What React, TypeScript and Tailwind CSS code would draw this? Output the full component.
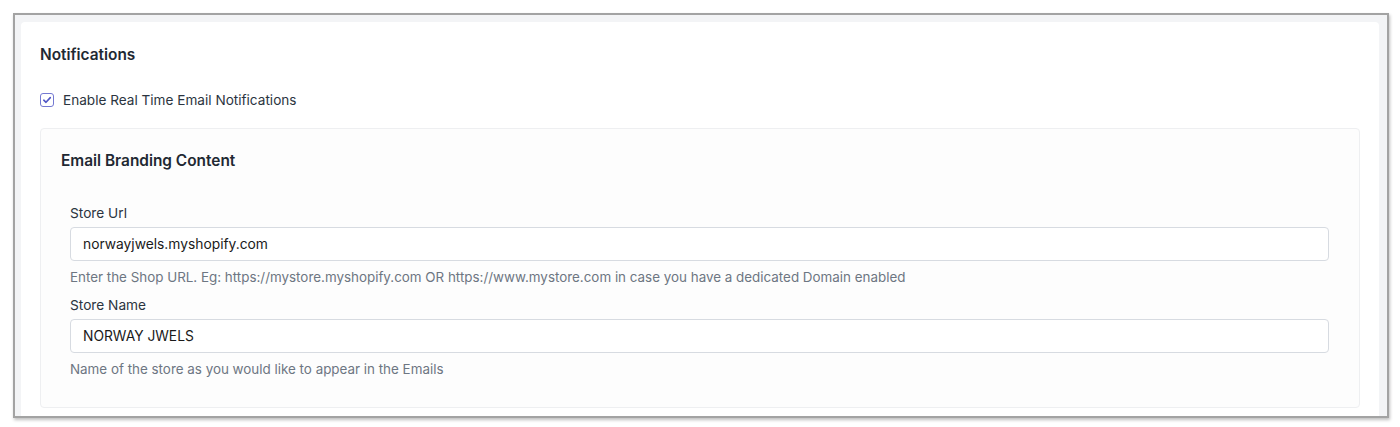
import React from 'react';

const font = { fontFamily: 'Inter, "Liberation Sans", sans-serif' };

interface FieldProps {
    label: string;
    value: string;
    help: string;
}

const Field = ({ label, value, help }: FieldProps) => (
    <div className="flex flex-col">
        <label className="text-[13.7px] leading-[20px] text-[#2b3440]">{label}</label>
        <input
            readOnly
            value={value}
            className="mt-[4px] h-[34px] w-full rounded-[4px] border border-[#d7dbe1] bg-white px-[12px] text-[13.8px] text-[#1a1a1a] outline-none"
        />
        <p className="mt-[7px] text-[13.4px] leading-[18px] text-[#6d7682]">{help}</p>
    </div>
);

export default function App() {
    return (
        <div className="h-[427px] w-[1400px] bg-white pt-[13px] pl-[13px]" style={font}>
            <div className="h-[405px] w-[1376px] overflow-hidden border-2 border-[#a3a3a3] bg-[#f3f4f6] pt-[7px] pl-[6px] pr-[8px] shadow-[1px_2px_3px_rgba(0,0,0,0.25)]">
                <div className="h-[420px] rounded-[4px] bg-white px-[19px] pt-[23px]">
                    <h2 className="text-[15.4px] font-semibold leading-[20px] text-[#1f2933]">Notifications</h2>

                    <label className="mt-[25px] flex items-center gap-[9px]">
                        <span className="flex h-[14px] w-[14px] items-center justify-center rounded-[3px] border-[1.5px] border-[#7479d2] bg-white">
                            <svg width="10" height="10" viewBox="0 0 10 10" fill="none">
                                <path d="M1.8 5.2 4 7.3 8.3 2.6" stroke="#5056c4" strokeWidth="1.6" strokeLinecap="round" strokeLinejoin="round" />
                            </svg>
                        </span>
                        <span className="text-[13.6px] leading-[20px] text-[#2b3440]">Enable Real Time Email Notifications</span>
                    </label>

                    <div className="mt-[18px] h-[280px] rounded-[4px] border border-[#eeeff1] bg-[#fdfdfd] pl-[20px] pr-[30px] pt-[22px]">
                        <h3 className="text-[15.4px] font-semibold leading-[20px] text-[#1f2933]">Email Branding Content</h3>
                        <div className="mt-[32px] pl-[9px] flex flex-col gap-[9px]">
                            <Field
                                label="Store Url"
                                value="norwayjwels.myshopify.com"
                                help="Enter the Shop URL. Eg: https://mystore.myshopify.com OR https://www.mystore.com in case you have a dedicated Domain enabled"
                            />
                            <Field
                                label="Store Name"
                                value="NORWAY JWELS"
                                help="Name of the store as you would like to appear in the Emails"
                            />
                        </div>
                    </div>
                </div>
            </div>
        </div>
    );
}
